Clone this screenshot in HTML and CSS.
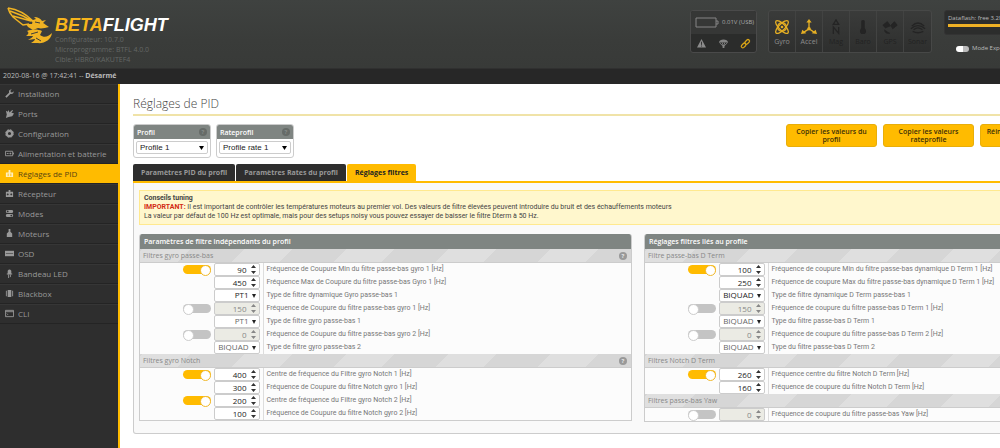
FILE: index.html
```html
<!DOCTYPE html>
<html lang="fr">
<head>
<meta charset="utf-8">
<title>Betaflight Configurator</title>
<link rel="stylesheet" href="styles.css">
</head>
<body>
<div class="app">
  <header class="topbar">
    <svg class="bee" viewBox="0 0 46 38" aria-hidden="true">
      <path class="wing" d="M1 1C8 2 18 6 26 14M1 1C2 5 4 8 6 10L16 18L22 17M6 9L24 14M3 4L16 9L27 15"/>
      <path class="fill" d="M26 13L29 12L27 10C31 10 34 12 35 14L39 13L36 16C38 17 39 18 42 20C38 21 34 22 31 21L26 23L21 20L19 17L25 17Z"/>
      <path class="fill" d="M20 24C25 22 31 22 35 24L33 28C37 31 41 30 45 26C44 33 37 37 30 36L24 36C27 34 28 33 28 32L21 33C24 31 26 30 26 29L19 29C22 27 22 25 20 24Z"/>
      <path class="cut" d="M28 15L33 16M24 27L31 25M29 31L34 34"/>
    </svg>
    <div class="brand">
      <div class="wordmark"><span class="beta">BETA</span>FLIGHT</div>
      <div class="versions">Configurateur: 10.7.0<br>Microprogramme: BTFL 4.0.0<br>Cible: HBRO/KAKUTEF4</div>
    </div>
    <div class="power">
      <div class="power-top">
        <svg class="battery" viewBox="0 0 24 11"><path d="M1 1H21V10H1Z M21 4H23V7H21" /></svg>
        <span>0.01V (USB)</span>
      </div>
      <div class="power-icons">
        <svg viewBox="0 0 10 10"><path fill="#8b8b8b" d="M5 0L10 9.500H0Z"/><path stroke="#2b2b2b" d="M5 3V6.500M5 7.300V8.300"/></svg>
        <svg viewBox="0 0 10 10"><path fill="#858585" d="M0 4C0-.5 10-.5 10 4Z"/><path fill="none" stroke="#858585" d="M.5 4L4.500 8M9.500 4L5.500 8M3.500 4L5 8L6.500 4"/><path fill="#858585" d="M4 7H6V10H4Z"/></svg>
        <svg viewBox="0 0 10 10"><g fill="none" stroke="#d7a317" stroke-width="1.400"><rect x="-1" y="3.400" width="6" height="3.400" rx="1.700" transform="rotate(-45 5 5)"/><rect x="4.500" y="3.400" width="6" height="3.400" rx="1.700" transform="rotate(-45 5 5)"/></g></svg>
      </div>
    </div>
    <ul class="sensors">
      <li class="on"><svg viewBox="0 0 18 18"><g fill="none" stroke="#e5af24" stroke-width="1.500"><ellipse cx="9" cy="9" rx="9.500" ry="3.500" transform="rotate(45 9 9)"/><ellipse cx="9" cy="9" rx="9.500" ry="3.500" transform="rotate(-45 9 9)"/><circle cx="9" cy="9" r="5"/></g><circle cx="9" cy="9" r="1.500" fill="#e5af24"/></svg>Gyro</li>
      <li class="on"><svg viewBox="0 0 18 18"><path d="M9 3V11L3 15M9 11L15 15" fill="none" stroke="#e5af24" stroke-width="1.500"/><path fill="#e5af24" d="M9 0L12 4H6ZM0 17L1.500 12L6 16ZM18 17L16.500 12L12 16Z"/><circle cx="9" cy="11" r="2" fill="#e5af24"/></svg>Accel</li>
      <li><svg viewBox="0 0 18 18"><path d="M9 1L12 6H6ZM6 17V9L12 16V9" fill="none" stroke="#242424" stroke-width="1.500"/></svg>Mag</li>
      <li><svg viewBox="0 0 18 18"><path d="M7 2Q9 0 11 2V10Q14 14 11 17H7Q4 14 7 10Z" fill="#242424"/></svg>Baro</li>
      <li><svg viewBox="0 0 18 18"><path d="M1 7L6 3L9 7L4 10ZM10 7L14 3L17 7L12 11ZM3 12Q3 17 9 16M6 9L12 7" fill="#242424" stroke="#242424"/></svg>GPS</li>
      <li><svg viewBox="0 0 18 18"><path d="M2 8Q9 1 16 8M1 11Q9 4 17 11M4 12Q9 8 14 12M3 14Q9 17 15 14" fill="none" stroke="#242424" stroke-width="1.500"/></svg>Sonar</li>
    </ul>
    <div class="flash">
      <div class="flash-box"><label for="flash">Dataflash: free 3.2MB</label><progress id="flash" value="100" max="100"></progress></div>
      <label class="expert"><input type="checkbox"> Mode Expert</label>
    </div>
  </header>
  <div class="status">2020-08-16 @ 17:42:41 -- <b>Désarmé</b></div>
  <div class="main">
    <nav class="sidebar">
      <a href="#"><svg viewBox="0 0 10 10"><path d="M1 9L6 4" stroke="#999" stroke-width="2"/><path fill="#999" d="M9.500 2.500L8 4L6.500 3.500L6 2L7.500.5Q4 0 4.500 4L6 5.500Q10 6 9.500 2.500Z"/></svg>Installation</a>
      <a href="#"><svg viewBox="0 0 10 10"><path fill="#999" d="M1 2L3 3L4 1L5 4L8 1L9 2L7 4L10 5L8 8L4 9L1 10L2 6Z"/></svg>Ports</a>
      <a href="#"><svg viewBox="0 0 10 10"><circle cx="5" cy="5" r="3" fill="none" stroke="#999" stroke-width="2.500"/><circle cx="5" cy="5" r="4.300" fill="none" stroke="#999" stroke-dasharray="2 1.380"/></svg>Configuration</a>
      <a href="#"><svg viewBox="0 0 10 10"><path fill="none" stroke="#999" d="M.5 2.500H8.500V7.500H.5ZM9.500 4V6M2 5H4M5 5H7M6 4V6"/></svg>Alimentation et batterie</a>
      <a href="#" class="active"><svg viewBox="0 0 10 10"><path fill="#fff0c0" d="M4 1H6V4H9V9H1V4H4Z"/><path stroke="#ffbb00" d="M3.500 5V8M6.500 5V8"/></svg>Réglages de PID</a>
      <a href="#"><svg viewBox="0 0 10 10"><path fill="#999" d="M4 1H6V3H9V9H1V3H4Z"/><path stroke="#2e2e2e" d="M2 6H4M6 6H8M3 5V7M7 5V7"/></svg>Récepteur</a>
      <a href="#"><svg viewBox="0 0 10 10"><rect x="1" y="1" width="8" height="3.500" rx="1.500" fill="#999"/><rect x="1" y="5.500" width="8" height="3.500" rx="1.500" fill="#999"/><circle cx="3" cy="2.700" r="1" fill="#2e2e2e"/><circle cx="7" cy="7.300" r="1" fill="#2e2e2e"/></svg>Modes</a>
      <a href="#"><svg viewBox="0 0 10 10"><path fill="#999" d="M4 0H6V3L8 5V9H2V5L4 3Z"/></svg>Moteurs</a>
      <a href="#"><svg viewBox="0 0 10 10"><path fill="#999" d="M0 2H10V8H0Z"/><path stroke="#2e2e2e" stroke-width=".6" d="M1 5H9"/></svg>OSD</a>
      <a href="#"><svg viewBox="0 0 10 10"><path fill="#999" d="M3 5V2Q5-1 7 2V5H8V6H2V5Z"/><path stroke="#999" d="M4 6V10M6 6V9"/></svg>Bandeau LED</a>
      <a href="#"><svg viewBox="0 0 10 10"><path fill="#999" d="M3 1H7V9H3ZM1 2H2V8H1ZM8 2H9V8H8Z"/></svg>Blackbox</a>
      <a href="#"><svg viewBox="0 0 10 10"><path fill="none" stroke="#999" d="M.5 1.500H9.500V8.500H.5ZM.5 3H9.500M2 5L3 6L2 7"/></svg>CLI</a>
    </nav>
    <main class="content">
      <h1>Réglages de PID</h1>
      <div class="tools">
        <div class="profile">
          <div class="profile-head"><label for="profil">Profil</label><span class="help">?</span></div>
          <select id="profil"><option>Profile 1</option></select>
        </div>
        <div class="profile">
          <div class="profile-head"><label for="rate">Rateprofil</label><span class="help">?</span></div>
          <select id="rate"><option>Profile rate 1</option></select>
        </div>
        <div class="actions">
          <button>Copier les valeurs du profil</button>
          <button>Copier les valeurs rateprofile</button>
          <button>Réinitialiser les valeurs du profil</button>
        </div>
      </div>
      <div class="tabs">
        <button>Paramètres PID du profil</button>
        <button>Paramètres Rates du profil</button>
        <button class="current">Réglages filtres</button>
      </div>
      <section class="panel">
        <div class="note"><b>Conseils tuning</b><br><b class="warn">IMPORTANT:</b> Il est important de contrôler les températures moteurs au premier vol. Des valeurs de filtre élevées peuvent introduire du bruit et des échauffements moteurs<br>La valeur par défaut de 100 Hz est optimale, mais pour des setups noisy vous pouvez essayer de baisser le filtre Dterm à 50 Hz.</div>
        <div class="columns">
          <div class="card">
            <h2>Paramètres de filtre indépendants du profil</h2>
            <h3>Filtres gyro passe-bas <span class="help">?</span></h3>
            <table>
              <tr><td><div class="ctl"><input type="checkbox" class="toggle" aria-label="Activer" checked><input type="number" id="g1" value="90"></div></td><td><label for="g1">Fréquence de Coupure Min du filtre passe-bas gyro 1 [Hz]</label></td></tr>
              <tr><td><div class="ctl"><input type="number" id="g2" value="450"></div></td><td><label for="g2">Fréquence Max de Coupure du filtre passe-bas Gyro 1 [Hz]</label></td></tr>
              <tr><td><div class="ctl"><select id="g3"><option>PT1</option></select></div></td><td><label for="g3">Type de filtre dynamique Gyro passe-bas 1</label></td></tr>
              <tr><td><div class="ctl"><input type="checkbox" class="toggle" aria-label="Activer"><input type="number" id="g4" value="150" disabled></div></td><td><label for="g4">Fréquence de Coupure du filtre passe-bas gyro 1 [Hz]</label></td></tr>
              <tr><td><div class="ctl"><select id="g5" disabled><option>PT1</option></select></div></td><td><label for="g5">Type de filtre gyro passe-bas 1</label></td></tr>
              <tr><td><div class="ctl"><input type="checkbox" class="toggle" aria-label="Activer"><input type="number" id="g6" value="0" disabled></div></td><td><label for="g6">Fréquence de Coupure du filtre passe-bas gyro 2 [Hz]</label></td></tr>
              <tr><td><div class="ctl"><select id="g7" disabled><option>BIQUAD</option></select></div></td><td><label for="g7">Type de filtre gyro passe-bas 2</label></td></tr>
            </table>
            <h3>Filtres gyro Notch <span class="help">?</span></h3>
            <table>
              <tr><td><div class="ctl"><input type="checkbox" class="toggle" aria-label="Activer" checked><input type="number" id="n1" value="400"></div></td><td><label for="n1">Centre de fréquence du Filtre gyro Notch 1 [Hz]</label></td></tr>
              <tr><td><div class="ctl"><input type="number" id="n2" value="300"></div></td><td><label for="n2">Fréquence de Coupure du filtre Notch gyro 1 [Hz]</label></td></tr>
              <tr><td><div class="ctl"><input type="checkbox" class="toggle" aria-label="Activer" checked><input type="number" id="n3" value="200"></div></td><td><label for="n3">Centre de fréquence du Filtre gyro Notch 2 [Hz]</label></td></tr>
              <tr><td><div class="ctl"><input type="number" id="n4" value="100"></div></td><td><label for="n4">Fréquence de Coupure du filtre Notch gyro 2 [Hz]</label></td></tr>
            </table>
          </div>
          <div class="card">
            <h2>Réglages filtres liés au profile</h2>
            <h3>Filtre passe-bas D Term <span class="help">?</span></h3>
            <table>
              <tr><td><div class="ctl"><input type="checkbox" class="toggle" aria-label="Activer" checked><input type="number" id="d1" value="100"></div></td><td><label for="d1">Fréquence de coupure Min du filtre passe-bas dynamique D Term 1 [Hz]</label></td></tr>
              <tr><td><div class="ctl"><input type="number" id="d2" value="250"></div></td><td><label for="d2">Fréquence de coupure Max du filtre passe-bas dynamique D Term 1 [Hz]</label></td></tr>
              <tr><td><div class="ctl"><select id="d3"><option>BIQUAD</option></select></div></td><td><label for="d3">Type de filtre dynamique D Term passe-bas 1</label></td></tr>
              <tr><td><div class="ctl"><input type="checkbox" class="toggle" aria-label="Activer"><input type="number" id="d4" value="150" disabled></div></td><td><label for="d4">Fréquence de coupure du filtre passe-bas D Term 1 [Hz]</label></td></tr>
              <tr><td><div class="ctl"><select id="d5" disabled><option>BIQUAD</option></select></div></td><td><label for="d5">Type du filtre passe-bas D Term 1</label></td></tr>
              <tr><td><div class="ctl"><input type="checkbox" class="toggle" aria-label="Activer"><input type="number" id="d6" value="0" disabled></div></td><td><label for="d6">Fréquence de coupure du filtre passe-bas D Term 2 [Hz]</label></td></tr>
              <tr><td><div class="ctl"><select id="d7" disabled><option>BIQUAD</option></select></div></td><td><label for="d7">Type du filtre passe-bas D Term 2</label></td></tr>
            </table>
            <h3>Filtres Notch D Term <span class="help">?</span></h3>
            <table>
              <tr><td><div class="ctl"><input type="checkbox" class="toggle" aria-label="Activer" checked><input type="number" id="t1" value="260"></div></td><td><label for="t1">Fréquence centre du filtre Notch D Term [Hz]</label></td></tr>
              <tr><td><div class="ctl"><input type="number" id="t2" value="160"></div></td><td><label for="t2">Fréquence de coupure du filtre Notch D Term [Hz]</label></td></tr>
            </table>
            <h3>Filtres passe-bas Yaw <span class="help">?</span></h3>
            <table>
              <tr><td><div class="ctl"><input type="checkbox" class="toggle" aria-label="Activer"><input type="number" id="y1" value="0" disabled></div></td><td><label for="y1">Fréquence de coupure du filtre passe-bas Yaw [Hz]</label></td></tr>
            </table>
          </div>
        </div>
      </section>
    </main>
  </div>
</div>
</body>
</html>
```
FILE: styles.css
```css
* { box-sizing: border-box; }
html { overflow: hidden; }
body { margin: 0; font: 7px/9px "Open Sans", sans-serif; color: #555; background: #fff; }
h1, h2, h3, ul { margin: 0; padding: 0; }
button, input, select { font: inherit; margin: 0; }
select, input[type="number"] { appearance: none; }

/* the configurator keeps a wide minimum; narrower windows cut it off */
.app { min-width: 1156px; min-height: 100vh; display: flex; flex-direction: column; }

.topbar { display: flex; align-items: flex-start; height: 69px; padding: 7px 128px 0 7px; background: linear-gradient(#3f4240, #3a3c3a 60%, #383a38); border-bottom: 1px solid #303030; }
.bee { width: 46px; height: 38px; margin-right: 2px; }
.bee .wing { fill: none; stroke: #f0b323; stroke-width: 1.500; }
.bee .fill { fill: #f0b323; }
.bee .cut { fill: none; stroke: #3c3e3c; stroke-width: 1; }
.brand { flex: 1; padding-top: 9px; }
.wordmark { font: italic bold 18px/19px "Liberation Sans", sans-serif; color: #fff; }
.beta { color: #f7b51c; }
.versions { color: #646765; line-height: 10px; }
.power, .sensors, .flash { margin-top: 3px; }

.power { width: 67px; border: 1px solid #4a4a4a; border-radius: 3px; background: #2b2c2b; overflow: hidden; margin-right: 11px; }
.power-top { display: flex; align-items: center; gap: 3px; height: 23px; padding-left: 4px; background: #363736; color: #aaa; font-size: 6px; white-space: nowrap; }
.battery { width: 24px; height: 11px; fill: none; stroke: #858585; }
.power-icons { display: flex; justify-content: space-around; align-items: center; height: 18px; }
.power-icons svg { width: 9px; height: 9px; overflow: visible; }

.sensors { display: flex; list-style: none; border: 1px solid #474847; border-radius: 3px; background: linear-gradient(#3a3b3a, #2e2f2e); margin-right: 12px; }
.sensors li { display: flex; flex-direction: column; align-items: center; width: 27px; height: 41px; padding-top: 8px; gap: 2px; border-right: 1px solid #424342; color: #222; }
.sensors li:last-child { border: 0; }
.sensors .on { color: #8d8d8d; }
.sensors svg { width: 16px; height: 16px; }

.flash { width: 84px; }
.flash-box { border: 1px solid #333; border-radius: 3px; background: #2c2d2c; height: 25px; padding: 3px 3px 0; color: #bbb; font-size: 6px; line-height: 8px; white-space: nowrap; }
.flash-box progress { display: block; appearance: none; width: 100%; height: 3px; margin-top: 2px; border: 0; }
.flash-box progress::-webkit-progress-bar { background: #444; }
.flash-box progress::-webkit-progress-value { background: #eeb125; }
.expert { display: flex; align-items: center; gap: 3px; padding: 9px 0 0 12px; color: #bbb; font-size: 6px; }
.expert input { appearance: none; width: 13px; height: 6px; border-radius: 3px; background: linear-gradient(90deg, #fff 50%, #bbb 50%); }

.status { height: 15px; padding-left: 3px; line-height: 14px; background: #272727; color: #bbb; }

.main { flex: 1; display: flex; }
.sidebar { flex: none; width: 120px; background: #2e2e2e; border-right: 2px solid #ffbb00; }
.sidebar a { display: flex; align-items: center; gap: 4px; height: 20px; padding-left: 5px; color: #999; text-decoration: none; border-bottom: 1px solid #242424; box-shadow: inset 0 1px #363636; font-size: 8px; }
.sidebar a.active { background: #ffbb00; color: #5a4610; box-shadow: none; }
.sidebar svg { width: 9px; height: 9px; }

.content { flex: 1; min-width: 0; padding: 11px 12px 14px 13px; }
h1 { font-size: 12px; font-weight: 300; line-height: 17px; padding-bottom: 2px; color: #444; border-bottom: 2px solid #f0e3a8; }
.tools { display: flex; gap: 5px; padding: 8px 73px 6px 0; }
.profile { width: 78px; border: 1px solid #ccc; border-radius: 3px; overflow: hidden; height: 34px; }
.profile-head { display: flex; align-items: center; justify-content: space-between; height: 14px; padding: 0 3px; background: #7f8582; color: #fff; font-weight: 600; }
.profile .help { background: #666b68; color: #858a87; }
.profile select { display: block; width: 72px; height: 13px; margin: 2px; padding: 0 3px; border: 1px solid #ccc; border-radius: 2px; color: #222; font: 8px/9px "Liberation Sans", sans-serif; background: #fff url("data:image/svg+xml,%3Csvg xmlns='http://www.w3.org/2000/svg' width='5' height='4'%3E%3Cpath d='M0 0h5L2.5 4z'/%3E%3C/svg%3E") no-repeat right 3px center; }
.help { flex: none; width: 8px; height: 8px; border-radius: 50%; background: #999; color: #e5e5e5; font-size: 6px; line-height: 8px; text-align: center; font-weight: 700; }
.actions { display: flex; gap: 6px; margin-left: auto; }
.actions button { width: 91px; height: 23px; padding: 0 4px; border: 1px solid #e8ae0a; border-radius: 3px; background: #ffbb00; color: #3c2f08; font-weight: 600; line-height: 8px; }

.tabs { display: flex; gap: 1px; border-bottom: 2px solid #ffbb00; }
.tabs button { height: 17px; padding: 0 8px; border: 0; border-radius: 2px 2px 0 0; background: #2e2e2e; color: #999; font-weight: 700; }
.tabs .current { background: #ffbb00; color: #222; }

.panel { padding: 7px 6px 11px 5px; border: 1px solid #ccc; border-top: 0; border-radius: 0 0 3px 3px; background: #f9f9f9; }
.note { padding: 3px 4px; border: 1px solid #ffe98f; background: #fff7cd; color: #444; font-family: Roboto, "Open Sans", sans-serif; white-space: nowrap; margin-bottom: 9px; }
.warn { color: #d22b12; }
.columns { display: grid; grid-template-columns: 1fr 1fr; gap: 12px; align-items: start; }
.card { border: 1px solid #ccc; border-top: 0; border-radius: 3px 3px 0 0; overflow: hidden; background: #fcfcfc; }
h2 { height: 15px; padding-left: 4px; font-size: 7px; line-height: 15px; font-weight: 600; color: #fff; background: #7f8582; }
h3 { display: flex; align-items: center; justify-content: space-between; height: 14px; padding: 0 4px 0 3px; font-size: 7px; font-weight: 400; color: #888; border-bottom: 1px solid #ccc; background: repeating-linear-gradient(135deg, #d6d6d6 0 2px, #dfdfdf 2px 36px, #d6d6d6 36px 72px); }
table { width: 100%; border-collapse: collapse; table-layout: fixed; }
td { height: 13px; padding: 0 0 0 3px; font: 7px/9px Roboto, "Open Sans", sans-serif; color: #777; white-space: nowrap; }
td:first-child { width: 123px; padding: 0 3px 0 0; border-right: 1px solid #ddd; }
.ctl { display: flex; justify-content: flex-end; align-items: center; gap: 3px; height: 13px; font-family: "Open Sans", sans-serif; }
.ctl input[type="number"], .ctl select { width: 46px; height: 13px; border: 1px solid #ccc; border-radius: 2px; padding: 0 12px 1px 0; color: #222; font-size: 8px; line-height: 10px; text-align: right; background: #fff url("data:image/svg+xml,%3Csvg xmlns='http://www.w3.org/2000/svg' width='5' height='9'%3E%3Cpath fill='%23333' d='M0 3h5L2.500 0zM0 6h5L2.500 9z'/%3E%3C/svg%3E") no-repeat right 3px center; }
.ctl input::-webkit-inner-spin-button { display: none; }
.ctl select { text-align-last: right; padding-right: 10px; background-image: url("data:image/svg+xml,%3Csvg xmlns='http://www.w3.org/2000/svg' width='4' height='4'%3E%3Cpath fill='%23222' d='M0 0h4L2 4z'/%3E%3C/svg%3E"); }
.ctl select:disabled { color: #666; opacity: 1; }
.ctl input[type="number"]:disabled { background-color: #ebebe4; color: #888; opacity: 1; background-image: url("data:image/svg+xml,%3Csvg xmlns='http://www.w3.org/2000/svg' width='5' height='9'%3E%3Cpath fill='%23888' d='M0 3h5L2.500 0zM0 6h5L2.500 9z'/%3E%3C/svg%3E"); }
.toggle { appearance: none; display: flex; width: 28px; height: 9px; border-radius: 5px; background: #c4c4c4; }
.toggle::before { content: ""; width: 9px; height: 9px; border-radius: 50%; background: #fff; border: 1px solid #ccc; }
.toggle:checked { background: #ffbb00; justify-content: flex-end; }
.toggle:checked::before { border-color: #f0b82a; }
```
